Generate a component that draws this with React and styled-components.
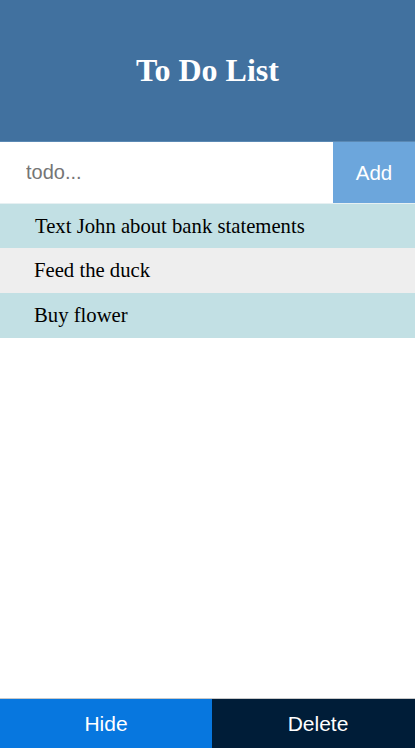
import React, { useState } from 'react';
import styled, { createGlobalStyle } from 'styled-components';

const GlobalStyle = createGlobalStyle`
  html, body {
    margin: 0;
    padding: 0;
    height: 100%;
    background: #ffffff;
  }
  #root {
    height: 100%;
  }
`;

const Page = styled.div`
  height: 748px;
  display: flex;
  flex-direction: column;
  overflow: hidden;
  font-family: "Liberation Serif", "Times New Roman", serif;
`;

const Header = styled.header`
  height: 141px;
  background-color: #41719f;
  border-bottom: 1px solid #5b89b4;
  display: flex;
  align-items: center;
  justify-content: center;
`;

const Title = styled.h1`
  margin: 0;
  color: #ffffff;
  font-size: 32px;
  font-weight: bold;
`;

const InputRow = styled.form`
  display: flex;
  height: 61px;
  border-bottom: 1px solid #e6f0f2;
`;

const TodoInput = styled.input`
  flex: 1;
  min-width: 0;
  border: none;
  outline: none;
  padding: 0 0 0 26px;
  font-family: "Liberation Sans", Arial, sans-serif;
  font-size: 20px;
  color: #333;
  &::placeholder {
    color: #757575;
  }
`;

const AddButton = styled.button`
  width: 82px;
  border: none;
  background-color: #6ca6dc;
  color: #ffffff;
  font-family: "Liberation Sans", Arial, sans-serif;
  font-size: 20.5px;
  cursor: pointer;
`;

const List = styled.ul`
  list-style: none;
  margin: 0;
  padding: 0;
  flex: 1;
`;

const Item = styled.li`
  height: ${p => (p.first ? 44 : 45)}px;
  display: flex;
  align-items: center;
  padding-left: ${p => (p.first ? 35 : 34)}px;
  background-color: ${p => (p.odd ? '#eeeeee' : '#c2e0e4')};
  font-size: 20.7px;
  color: #000;
`;

/* both buttons are the same width; the second one runs past the right edge */
const Footer = styled.div`
  display: flex;
  height: 49px;
  border-top: 1px solid #c8c8c8;
  overflow: hidden;
`;

const FooterButton = styled.button`
  flex: 0 0 212px;
  border: none;
  background-color: ${p => p.bg};
  color: #ffffff;
  font-family: "Liberation Sans", Arial, sans-serif;
  font-size: 21px;
  cursor: pointer;
`;

const initialTodos = ['Text John about bank statements', 'Feed the duck', 'Buy flower'];

export default function App() {
  const [todos, setTodos] = useState(initialTodos);
  const [text, setText] = useState('');

  const add = (e) => {
    e.preventDefault();
    if (!text.trim()) return;
    setTodos([...todos, text]);
    setText('');
  };

  return (
    <>
      <GlobalStyle />
      <Page>
        <Header>
          <Title>To Do List</Title>
        </Header>
        <InputRow onSubmit={add}>
          <TodoInput placeholder="todo..." value={text} onChange={(e) => setText(e.target.value)} />
          <AddButton type="submit">Add</AddButton>
        </InputRow>
        <List>
          {todos.map((t, i) => (
            <Item key={i} first={i === 0} odd={i % 2 === 1}>{t}</Item>
          ))}
        </List>
        <Footer>
          <FooterButton bg="#0777df">Hide</FooterButton>
          <FooterButton bg="#001d38">Delete</FooterButton>
        </Footer>
      </Page>
    </>
  );
}
